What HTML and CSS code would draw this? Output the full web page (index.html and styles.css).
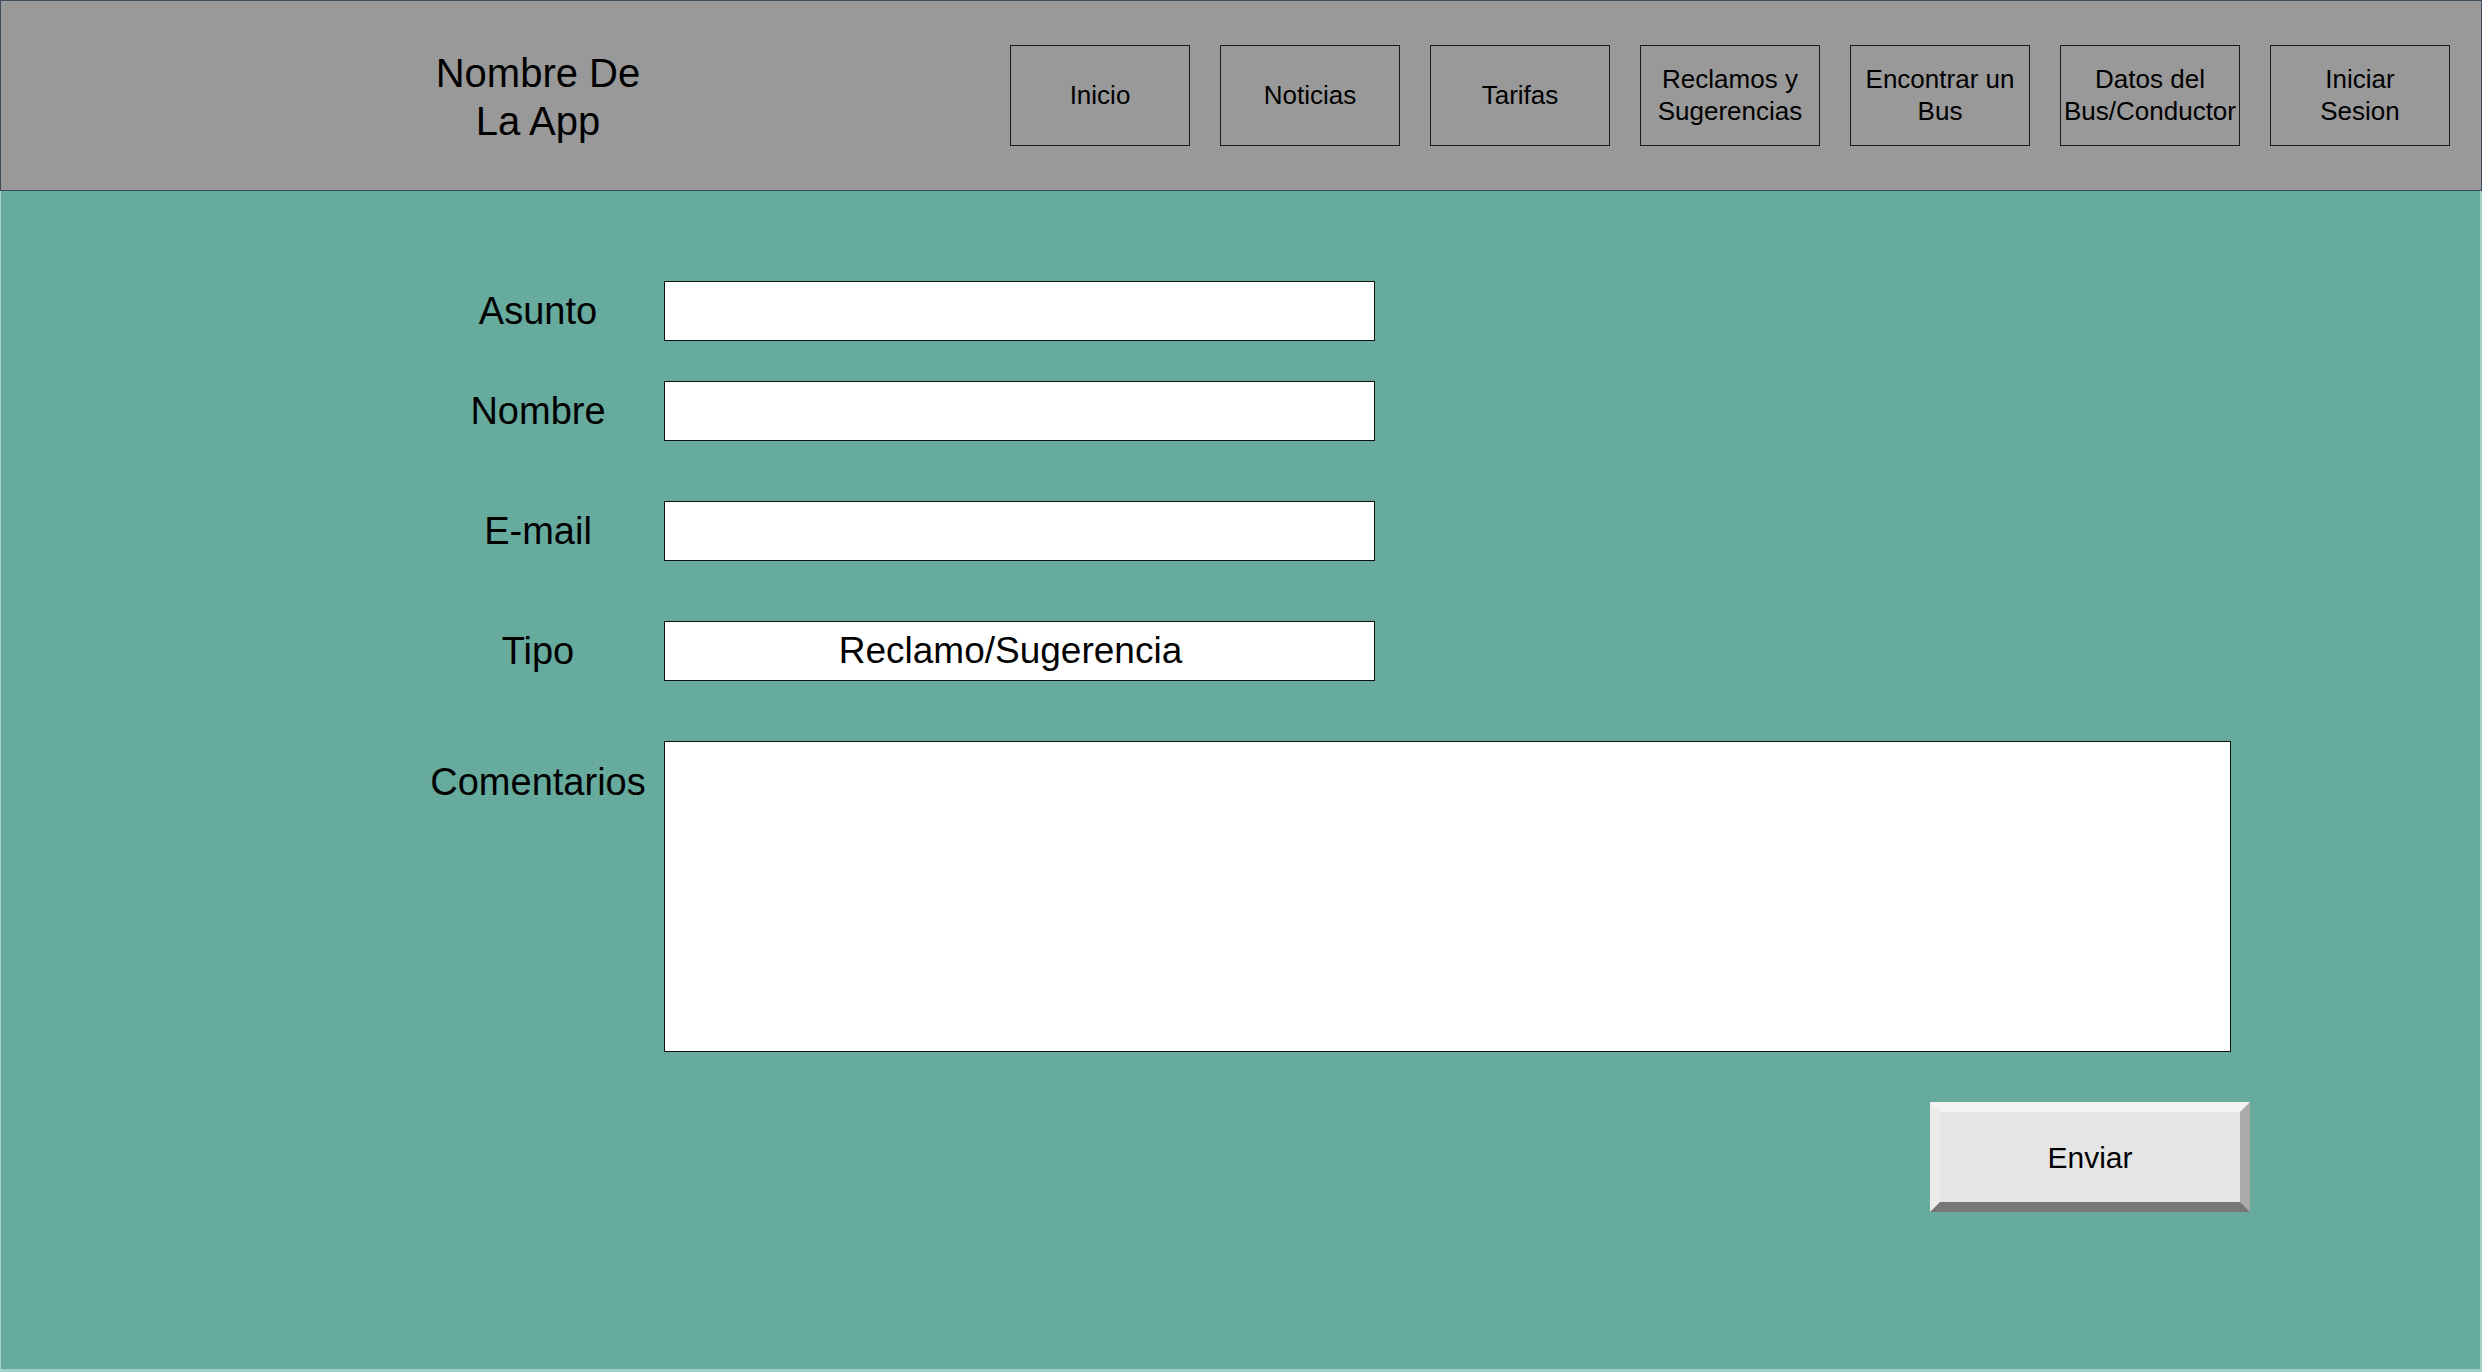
FILE: index.html
```html
<!DOCTYPE html>
<html lang="es">
<head>
<meta charset="utf-8">
<title>Reclamos y Sugerencias</title>
<link rel="stylesheet" href="styles.css">
</head>
<body>
<div class="page">
  <header class="topbar">
    <div class="brand">Nombre De<br>La App</div>
    <nav class="nav">
      <div class="nav-btn">Inicio</div>
      <div class="nav-btn">Noticias</div>
      <div class="nav-btn">Tarifas</div>
      <div class="nav-btn">Reclamos y<br>Sugerencias</div>
      <div class="nav-btn">Encontrar un<br>Bus</div>
      <div class="nav-btn">Datos del<br>Bus/Conductor</div>
      <div class="nav-btn">Iniciar<br>Sesion</div>
    </nav>
  </header>
  <main class="content">
    <form class="form">
      <div class="row row-first">
        <div class="label">Asunto</div>
        <div class="field"></div>
      </div>
      <div class="row row-tight">
        <div class="label">Nombre</div>
        <div class="field"></div>
      </div>
      <div class="row">
        <div class="label">E-mail</div>
        <div class="field"></div>
      </div>
      <div class="row">
        <div class="label">Tipo</div>
        <div class="field field-select">Reclamo/Sugerencia</div>
      </div>
      <div class="row row-area">
        <div class="label label-top">Comentarios</div>
        <div class="field field-area"></div>
      </div>
      <div class="actions">
        <div class="btn-send">Enviar</div>
      </div>
    </form>
  </main>
</div>
</body>
</html>
```

FILE: styles.css
```css
html, body {
  margin: 0;
  padding: 0;
}
body {
  font-family: "Liberation Sans", Arial, sans-serif;
  color: #000;
  background: #67ab9f;
}
.page {
  width: 2482px;
  height: 1372px;
  display: flex;
  flex-direction: column;
  overflow: hidden;
}
.topbar {
  box-sizing: border-box;
  height: 191px;
  flex: none;
  background: #999999;
  border: 1px solid #3e4d5c;
  display: flex;
  align-items: center;
  padding-left: 417px;
  padding-right: 31px;
}
.brand {
  width: 240px;
  text-align: center;
  font-size: 40px;
  line-height: 48px;
  padding-top: 2px;
}
.nav {
  margin-left: auto;
  display: flex;
  gap: 30px;
}
.nav-btn {
  box-sizing: border-box;
  width: 180px;
  height: 101px;
  border: 1px solid #1a1a1a;
  display: flex;
  align-items: center;
  justify-content: center;
  text-align: center;
  font-size: 26px;
  line-height: 32px;
  padding-bottom: 2px;
}
.content {
  flex: 1;
  box-sizing: border-box;
  background: #67ab9f;
  border-left: 1px solid #a2d1c9;
  border-right: 2px solid #a2d1c9;
  border-bottom: 3px solid #a2d1c9;
  padding-left: 417px;
  padding-top: 90px;
}
.form {
  width: 1832px;
  display: flex;
  flex-direction: column;
}
.row {
  display: flex;
  align-items: center;
  gap: 6px;
  margin-top: 60px;
}
.row-first {
  margin-top: 0;
}
.row-tight {
  margin-top: 40px;
}
.label {
  width: 240px;
  flex: none;
  text-align: center;
  font-size: 38px;
  line-height: 46px;
}
.label-top {
  align-self: flex-start;
  padding-top: 18px;
}
.field {
  box-sizing: border-box;
  width: 711px;
  height: 60px;
  background: #fff;
  border: 1px solid #111;
}
.field-select {
  display: flex;
  align-items: center;
  justify-content: center;
  font-size: 37px;
  padding-right: 18px;
}
.field-area {
  width: 1567px;
  height: 311px;
}
.actions {
  display: flex;
  justify-content: flex-end;
  margin-top: 50px;
}
.btn-send {
  box-sizing: border-box;
  width: 320px;
  height: 110px;
  background: #e5e5e5;
  border-top: 10px solid #f3f3f3;
  border-left: 10px solid #ececec;
  border-right: 10px solid #aaaaaa;
  border-bottom: 10px solid #777777;
  display: flex;
  align-items: center;
  justify-content: center;
  font-size: 30px;
  padding-top: 2px;
}
```
